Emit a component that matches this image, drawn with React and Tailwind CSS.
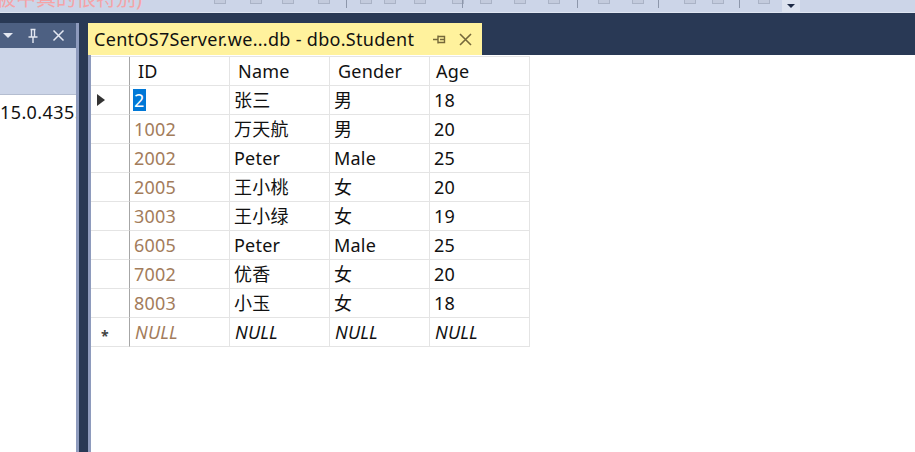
import React from "react";

const rows = [
  { id: "2", name: "张三", gender: "男", age: "18", current: true },
  { id: "1002", name: "万天航", gender: "男", age: "20" },
  { id: "2002", name: "Peter", gender: "Male", age: "25" },
  { id: "2005", name: "王小桃", gender: "女", age: "20" },
  { id: "3003", name: "王小绿", gender: "女", age: "19" },
  { id: "6005", name: "Peter", gender: "Male", age: "25" },
  { id: "7002", name: "优香", gender: "女", age: "20" },
  { id: "8003", name: "小玉", gender: "女", age: "18" },
];

const font = { fontFamily: '"Noto Sans", "Noto Sans CJK SC", sans-serif' };

// faint toolbar glyphs, only the bottom of them shows
const toolIcons = [214, 250, 282, 318, 360, 384, 414, 452, 480, 514, 548, 598, 632, 684, 712, 758];
const separators = [346, 462, 577, 658, 739];

function Toolbar() {
  return (
    <div className="relative h-[13px] shrink-0 overflow-hidden bg-[#ccd5e8]">
      <span
        className="absolute left-[-4px] top-[-11px] text-[20px] leading-none whitespace-nowrap text-[#f5a3a6]"
        style={font}
      >
        被中真的很特别)
      </span>
      {toolIcons.map((x) => (
        <div key={x} className="absolute top-[-6px] h-[10px] w-[12px] border border-[#aab3c6] bg-[#c3cbdd]" style={{ left: x }} />
      ))}
      {separators.map((x) => (
        <div key={x} className="absolute top-0 h-[8px] w-px bg-[#8d97ab]" style={{ left: x }} />
      ))}
      <div className="absolute left-[782px] top-0 flex h-[12px] w-[18px] items-center justify-center bg-[#dde3ef]">
        <div className="h-0 w-0 border-x-[4px] border-t-[4px] border-x-transparent border-t-[#1e2a44]" />
      </div>
      <div className="absolute bottom-0 left-0 h-px w-full bg-[#dfe5f1]" />
    </div>
  );
}

function LeftPanel() {
  return (
    <div className="flex w-[79px] shrink-0 flex-col border-r-[3px] border-[#8e9bbd]">
      <div className="flex h-[25px] items-center bg-[#4d6082] text-[#e4e8f2]">
        <div className="ml-[3px] h-0 w-0 border-x-[5px] border-t-[5px] border-x-transparent border-t-[#e4e8f2]" />
        <svg className="ml-[14px]" width="12" height="16" viewBox="0 0 12 16" fill="none" stroke="#e4e8f2" strokeWidth="1.4">
          <path d="M3.5 1.5h5M4.5 1.5v7M7.5 1.5v7M1.5 9h9M6 9v6" />
        </svg>
        <svg className="ml-[13px]" width="13" height="13" viewBox="0 0 13 13" stroke="#e4e8f2" strokeWidth="1.5">
          <path d="M1.5 1.5l10 10M11.5 1.5l-10 10" />
        </svg>
      </div>
      <div className="h-[47px] border-b border-[#b4bdd0] bg-[#ccd5e8]" />
      <div className="flex-1 overflow-hidden bg-white pt-[5px]">
        <span className="block whitespace-nowrap text-[18px] leading-[24px] tracking-[0.4px] text-[#111]" style={font}>
          15.0.435<span className="text-[#e8b04a]">5</span>
        </span>
      </div>
    </div>
  );
}

function Cell({ children, className = "" }) {
  return (
    <div className={`flex h-[29px] items-center overflow-hidden whitespace-nowrap border-b border-r border-[#e4e4e4] ${className}`}>
      {children}
    </div>
  );
}

function Grid() {
  return (
    <div
      className="grid w-fit grid-cols-[39px_100px_100px_100px_100px] border-t border-[#e4e4e4] text-[18px] tracking-[0.2px] text-[#111]"
      style={font}
    >
      <Cell className="!border-r-[#a6a6a6]" />
      <Cell className="pl-[8px]">ID</Cell>
      <Cell className="pl-[8px]">Name</Cell>
      <Cell className="pl-[8px]">Gender</Cell>
      <Cell className="pl-[6px]">Age</Cell>
      {rows.map((r) => (
        <React.Fragment key={r.id}>
          <Cell className="justify-start pl-[6px] !border-r-[#a6a6a6]">
            {r.current && (
              <div className="h-0 w-0 border-y-[6px] border-l-[8px] border-y-transparent border-l-[#333]" />
            )}
          </Cell>
          <Cell className="pl-[3px]">
            {r.current ? (
              <span className="bg-[#0078d7] px-[1px] leading-[22px] text-white">{r.id}</span>
            ) : (
              <span className="pl-[1px] text-[#a37c5b]">{r.id}</span>
            )}
          </Cell>
          <Cell className="pl-[4px]">{r.name}</Cell>
          <Cell className="pl-[4px]">{r.gender}</Cell>
          <Cell className="pl-[4px]">{r.age}</Cell>
        </React.Fragment>
      ))}
      <Cell className="pl-[10px] pt-[6px] text-[14px] font-bold text-[#444] !border-r-[#a6a6a6]">*</Cell>
      <Cell className="pl-[5px] italic text-[#a37c5b]">NULL</Cell>
      <Cell className="pl-[5px] italic">NULL</Cell>
      <Cell className="pl-[5px] italic">NULL</Cell>
      <Cell className="pl-[5px] italic">NULL</Cell>
    </div>
  );
}

function Document() {
  return (
    <div className="ml-[9px] flex min-w-0 flex-1 flex-col">
      <div className="flex h-[32px] shrink-0">
        <div className="flex w-[394px] items-start bg-[#fff29d] pl-[6px] pr-[9px] pt-[3px]" style={font}>
          <span className="flex-1 whitespace-nowrap text-[18px] leading-[26px] tracking-[0.3px] text-[#111]">
            CentOS7Server.we...db - dbo.Student
          </span>
          <svg className="mt-[8px]" width="14" height="11" viewBox="0 0 14 11" fill="none" stroke="#75683a" strokeWidth="1.4">
            <path d="M1 5.5h5M6 1.5v8M6.5 2.5h6v6h-6M8 5.5h4" />
          </svg>
          <svg className="ml-[12px] mt-[6px]" width="15" height="15" viewBox="0 0 15 15" stroke="#75683a" strokeWidth="1.6">
            <path d="M2 2l11 11M13 2L2 13" />
          </svg>
        </div>
      </div>
      <div className="flex-1 border-l-[3px] border-[#8e9bbd] bg-white pt-px">
        <Grid />
      </div>
    </div>
  );
}

export default function App() {
  return (
    <div className="flex h-[452px] w-[915px] flex-col overflow-hidden bg-[#293955]">
      <Toolbar />
      <div className="flex min-h-0 flex-1 pt-[10px]">
        <LeftPanel />
        <Document />
      </div>
    </div>
  );
}
